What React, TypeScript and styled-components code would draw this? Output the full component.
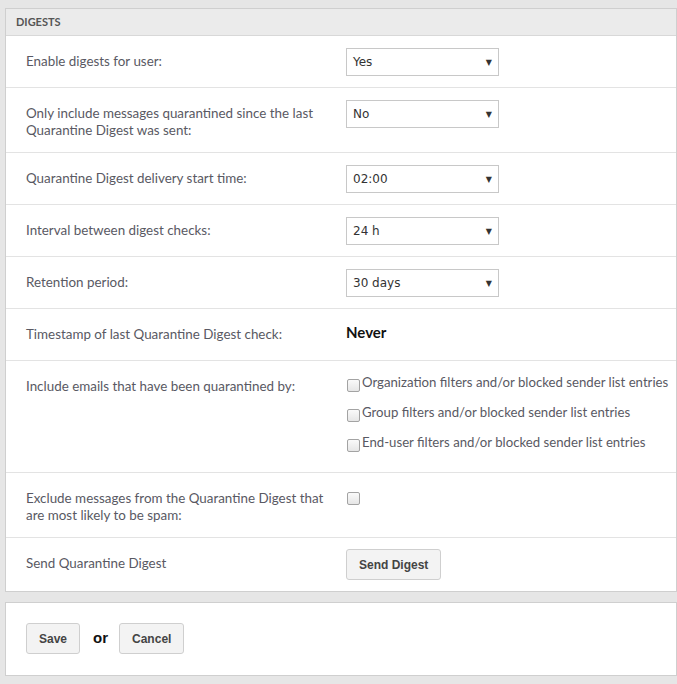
import styled, { createGlobalStyle } from "styled-components";

const GlobalStyle = createGlobalStyle`
	html, body {
		margin: 0;
		padding: 0;
		background: #e6e6e6;
	}
	body {
		font-family: "Lato", "Liberation Sans", sans-serif;
	}
`;

type SettingRow = {
	label: string;
	control: "select" | "text" | "checks" | "check" | "button";
	value?: string;
	height: number;
};

const rows: SettingRow[] = [
	{ label: "Enable digests for user:", control: "select", value: "Yes", height: 52 },
	{
		label: "Only include messages quarantined since the last Quarantine Digest was sent:",
		control: "select",
		value: "No",
		height: 65,
	},
	{ label: "Quarantine Digest delivery start time:", control: "select", value: "02:00", height: 52 },
	{ label: "Interval between digest checks:", control: "select", value: "24 h", height: 52 },
	{ label: "Retention period:", control: "select", value: "30 days", height: 52 },
	{ label: "Timestamp of last Quarantine Digest check:", control: "text", value: "Never", height: 52 },
	{ label: "Include emails that have been quarantined by:", control: "checks", height: 112 },
	{
		label: "Exclude messages from the Quarantine Digest that are most likely to be spam:",
		control: "check",
		height: 65,
	},
	{ label: "Send Quarantine Digest", control: "button", value: "Send Digest", height: 53 },
];

const sources = [
	"Organization filters and/or blocked sender list entries",
	"Group filters and/or blocked sender list entries",
	"End-user filters and/or blocked sender list entries",
];

const App = () => {
	return (
		<Page>
			<GlobalStyle />
			<Panel>
				<PanelHeader>DIGESTS</PanelHeader>
				{rows.map((row) => (
					<Row key={row.label} $height={row.height}>
						<Label>{row.label}</Label>
						<Control>
							{row.control === "select" && (
								<Select>
									<span>{row.value}</span>
									<Arrow>▼</Arrow>
								</Select>
							)}
							{row.control === "text" && <Value>{row.value}</Value>}
							{row.control === "checks" && (
								<CheckList>
									{sources.map((s) => (
										<CheckItem key={s}>
											<Box $top={6} />
											<span>{s}</span>
										</CheckItem>
									))}
								</CheckList>
							)}
							{row.control === "check" && <Box $top={7} />}
							{row.control === "button" && <SendButton>{row.value}</SendButton>}
						</Control>
					</Row>
				))}
			</Panel>
			<Footer>
				<Button>Save</Button>
				<Or>or</Or>
				<Button>Cancel</Button>
			</Footer>
		</Page>
	);
};

const Page = styled.div`
	padding: 8px 0 0 5px;
	width: 677px;
	min-height: 684px;
	box-sizing: border-box;
`;

const Panel = styled.div`
	background: #fff;
	border: 1px solid #cfcfcf;
`;

const PanelHeader = styled.div`
	height: 26px;
	background: #ebebeb;
	border-bottom: 1px solid #d8d8d8;
	padding-left: 10px;
	font-size: 11px;
	font-weight: 700;
	line-height: 26px;
	color: #555;
`;

const Row = styled.div<{ $height: number }>`
	display: grid;
	grid-template-columns: 320px 1fr;
	align-items: start;
	min-height: ${(p) => p.$height}px;
	padding: 0 0 0 20px;
	border-bottom: 1px solid #e3e3e3;
	box-sizing: border-box;
	&:last-child {
		border-bottom: none;
	}
`;

const Label = styled.div`
	padding: 17px 16px 0 0;
	font-size: 13.4px;
	line-height: 17px;
	color: #595963;
`;

const Control = styled.div`
	display: flex;
	align-items: flex-start;
	padding-top: 12px;
`;

const Select = styled.div`
	width: 153px;
	height: 28px;
	box-sizing: border-box;
	border: 1px solid #c8c8c8;
	background: #fff;
	display: flex;
	align-items: center;
	justify-content: space-between;
	padding: 0 6px;
	font-family: "DejaVu Sans", Verdana, sans-serif;
	font-size: 12px;
	color: #333;
`;

const Arrow = styled.span`
	font-size: 8px;
	color: #333;
`;

const Value = styled.div`
	margin-top: 1px;
	font-size: 15px;
	line-height: 20px;
	font-weight: 700;
	color: #111;
`;

const CheckList = styled.div`
	display: flex;
	flex-direction: column;
	gap: 11px;
`;

const CheckItem = styled.label`
	display: flex;
	align-items: flex-start;
	gap: 2px;
	font-size: 13.2px;
	line-height: 18px;
	color: #595963;
`;

const Box = styled.span<{ $top: number }>`
	display: inline-block;
	width: 11px;
	height: 11px;
	margin: ${(p) => p.$top}px 0 0 1px;
	border: 1px solid #a3a3a3;
	border-radius: 2px;
	background: linear-gradient(#fafafa, #e6e6e6);
	flex-shrink: 0;
`;

const Button = styled.button`
	height: 31px;
	padding: 0 12px;
	border: 1px solid #cfcfcf;
	border-radius: 3px;
	background: #f3f3f3;
	font-family: "Liberation Sans", Arial, sans-serif;
	font-size: 12px;
	font-weight: 700;
	color: #444;
`;

const SendButton = styled(Button)`
	margin-top: -1px;
`;

const Footer = styled.div`
	margin-top: 10px;
	background: #fff;
	border: 1px solid #cfcfcf;
	height: 74px;
	box-sizing: border-box;
	padding: 20px;
	display: flex;
	align-items: flex-start;
`;

const Or = styled.span`
	font-family: "Liberation Sans", Arial, sans-serif;
	font-size: 15px;
	font-weight: 700;
	color: #111;
	margin: 6px 11px 0 13px;
`;

export default App;
